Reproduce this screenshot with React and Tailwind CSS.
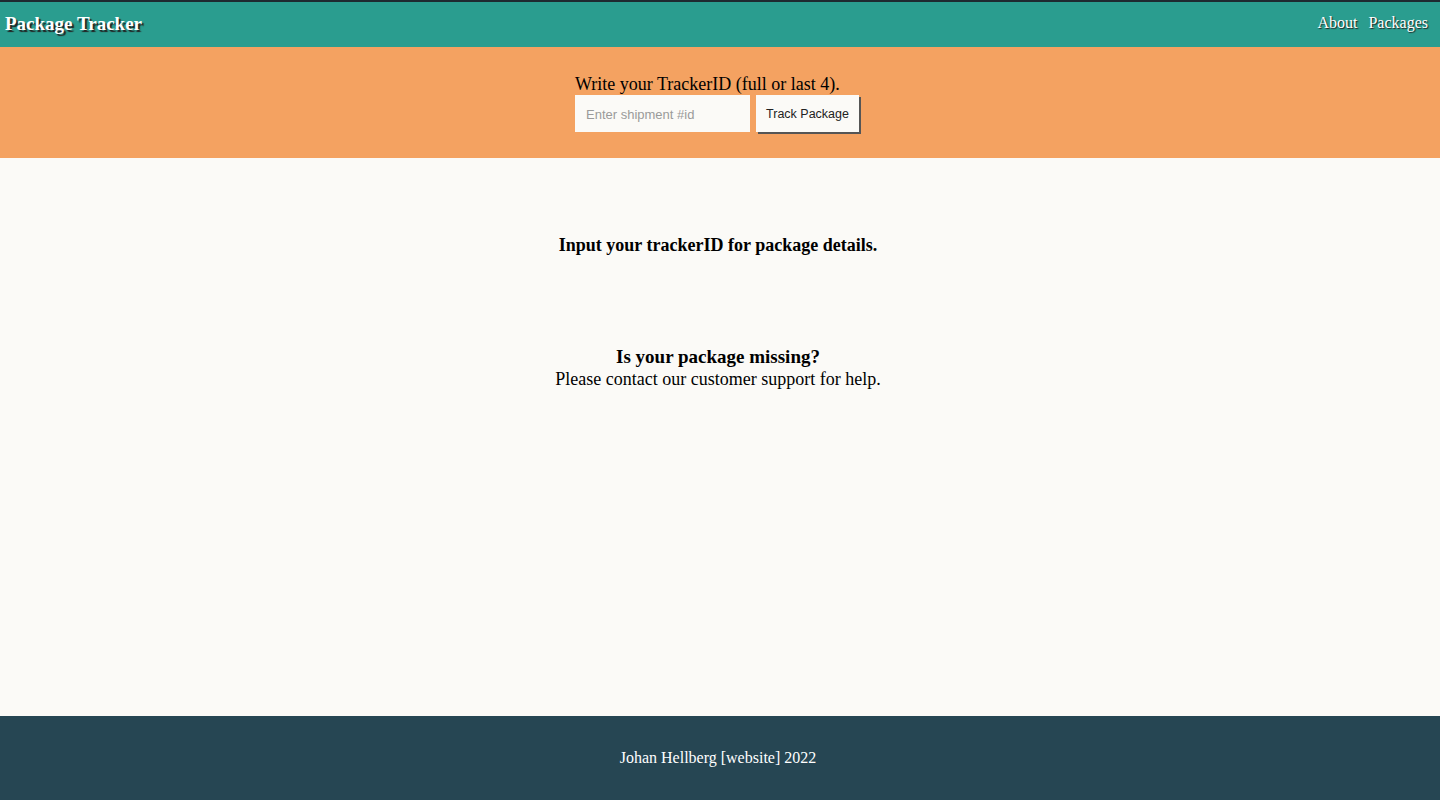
export default function App() {
  return (
    <div className="min-h-screen flex flex-col bg-[#fbfaf7] font-['Liberation_Serif',serif] text-black">
      <header className="h-[47px] flex items-center justify-between bg-[#2a9d8f] border-t-2 border-[#1e2a30] pl-[5px] pr-[12px]">
        <h1 className="text-[19px] font-bold text-white [text-shadow:2px_2px_1px_#222]">Package Tracker</h1>
        <nav className="flex gap-[11px] text-[16px] text-white [text-shadow:1px_1px_1px_#222] -mt-[3px]">
          <a href="#">About</a>
          <a href="#">Packages</a>
        </nav>
      </header>

      <section className="h-[111px] bg-[#f4a261] flex justify-center pt-[27px] pr-[6px]">
        <div className="flex flex-col">
          <label className="text-[18px] leading-[21px]">Write your TrackerID (full or last 4).</label>
          <div className="flex gap-[6px]">
            <input
              className="w-[175px] h-[37px] bg-[#fbfaf7] px-[11px] pt-[2px] text-[13px] font-['Liberation_Sans',sans-serif] placeholder:text-[#9a9a9a] outline-none"
              placeholder="Enter shipment #id"
            />
            <button className="w-[103px] h-[37px] pt-[2px] bg-[#fbfaf7] text-[12.5px] font-['Liberation_Sans',sans-serif] text-[#222] shadow-[2px_2px_0_#555]">
              Track Package
            </button>
          </div>
        </div>
      </section>

      <main className="h-[558px] flex flex-col items-center text-center pr-[4px]">
        <h2 className="mt-[76px] text-[18px] font-bold leading-[22px]">Input your trackerID for package details.</h2>
        <h3 className="mt-[90px] text-[19px] font-bold leading-[22px]">Is your package missing?</h3>
        <p className="text-[18px] leading-[22px]">Please contact our customer support for help.</p>
      </main>

      <footer className="h-[84px] bg-[#264653] flex items-center justify-center text-white text-[16px] pr-[4px]">
        <p>Johan Hellberg [website] 2022</p>
      </footer>
    </div>
  )
}
